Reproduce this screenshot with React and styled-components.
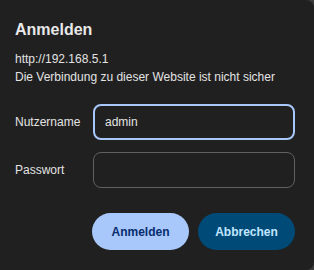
import React from "react"
import styled, {createGlobalStyle} from 'styled-components'

const GlobalStyle = createGlobalStyle`
  html, body {
    margin: 0;
    background: #3c3c3c;
  }
  * { box-sizing: border-box; }
`

const App = () => {
  return(
    <>
      <GlobalStyle />
      <Dialog>
        <Title>Anmelden</Title>
        <Origin>http://192.168.5.1</Origin>
        <Warning>Die Verbindung zu dieser Website ist nicht sicher</Warning>
        <Form>
          <Label>Nutzername</Label>
          <Input focused defaultValue="admin" />
          <Label>Passwort</Label>
          <Input type="password" />
        </Form>
        <Actions>
          <Button primary>Anmelden</Button>
          <Button>Abbrechen</Button>
        </Actions>
      </Dialog>
    </>
  )
}

export default App

const Dialog = styled.div`
  width: 314px;
  height: 270px;
  background: #202020;
  border-radius: 0 8px 8px 0;
  padding: 19px 19px 0 15px;
  font-family: "Liberation Sans", Arial, sans-serif;
  color: #e3e3e3;
`

const Title = styled.h1`
  margin: 0;
  font-size: 16px;
  font-weight: 700;
  line-height: 22px;
  color: #e8e8e8;
`

const Origin = styled.div`
  margin-top: 9px;
  font-size: 12px;
  line-height: 18px;
`

const Warning = styled.div`
  font-size: 12px;
  line-height: 18px;
`

const Form = styled.div`
  margin-top: 18px;
  display: grid;
  grid-template-columns: 78px 1fr;
  row-gap: 12px;
  align-items: center;
`

const Label = styled.label`
  font-size: 12px;
`

const Input = styled.input`
  height: 36px;
  width: 100%;
  background: transparent;
  border: ${p => p.focused ? '2px solid #a8c7fa' : '1px solid #5f6061'};
  border-radius: 8px;
  padding: 0 ${p => p.focused ? '10px' : '11px'};
  font-family: inherit;
  font-size: 12px;
  color: #e3e3e3;
  outline: none;
`

const Actions = styled.div`
  margin-top: 25px;
  display: flex;
  justify-content: flex-end;
  gap: 9px;
`

const Button = styled.button`
  width: 97px;
  height: 37px;
  border: none;
  border-radius: 19px;
  font-family: inherit;
  font-size: 12px;
  font-weight: 700;
  background: ${p => p.primary ? '#a8c7fa' : '#004a77'};
  color: ${p => p.primary ? '#062e6f' : '#c2e7ff'};
`
